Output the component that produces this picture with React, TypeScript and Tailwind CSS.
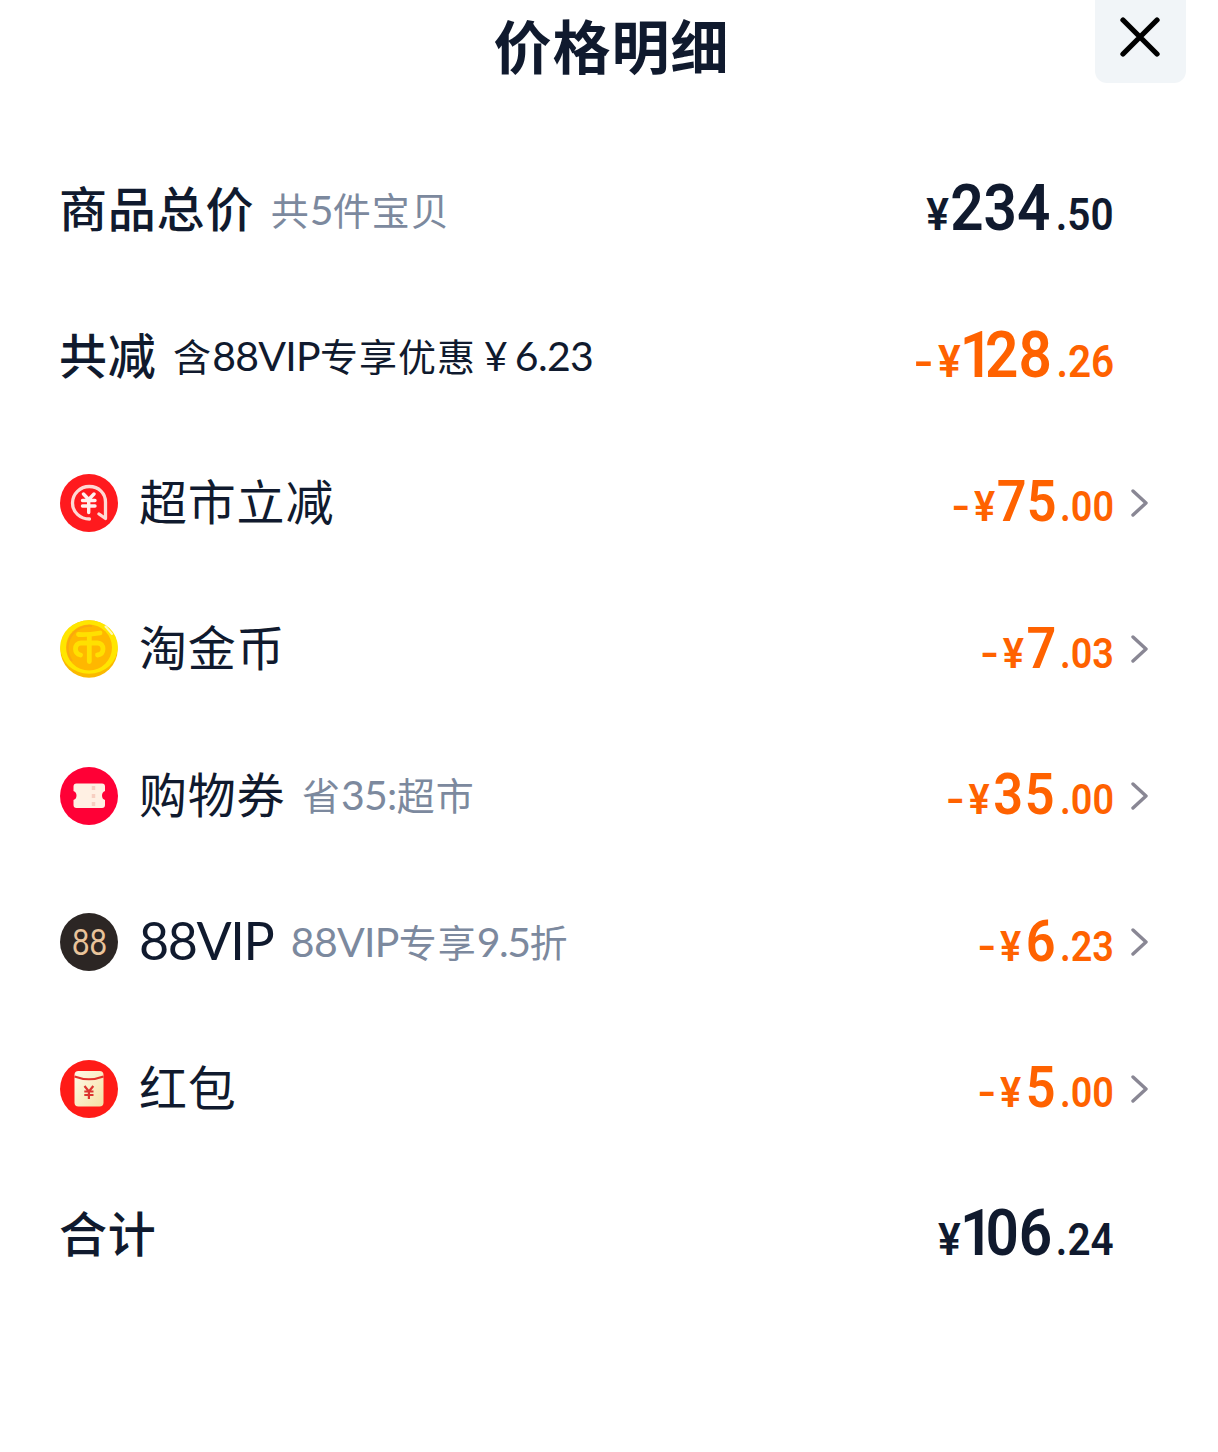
import type { ReactNode } from "react";

type Part = { text: string; className: string };

type Row = {
  parts: Part[];
  note?: Part[];
  noteClass?: string;
  icon?: ReactNode;
  bold?: boolean;
  minus?: boolean;
  whole: string;
  wholeClass?: string;
  cents: string;
};

const DiscountIcon = () => (
  <svg viewBox="0 0 58 58" className="size-[58px]">
    <circle cx="29" cy="29" r="29" fill="#ff1a1e" />
    <path d="M29.500 45C20 45 12.500 38 12.500 29C12.500 20 20 12.500 29.300 12.500C39 12.500 45.500 19.500 45.500 28V44.500L39 40" fill="none" stroke="#ffd9d4" strokeWidth="3.300" strokeLinejoin="round" strokeLinecap="round" />
    <path d="M23.500 20L28.700 25.500L34 20M22.500 26.500H35M22.500 32H35M28.700 25.500V38.500" fill="none" stroke="#fff0ee" strokeWidth="3.400" strokeLinecap="round" />
  </svg>
);

const CoinIcon = () => (
  <svg viewBox="0 0 58 58" className="size-[58px]">
    <circle cx="29" cy="29" r="28.700" fill="#fbb900" />
    <ellipse cx="29" cy="27" rx="28.800" ry="26.800" fill="#ffe600" />
    <circle cx="29" cy="27.500" r="23" fill="#ffb700" />
    <path d="M12 41A22 22 0 0 1 32 6" fill="none" stroke="#faa80f" strokeWidth="2" />
    <path d="M18.500 14.500C26 15 34 14 40 13M29.300 15V41.500M20.500 35C16.500 34 15.500 31 15.500 29C15.500 25.500 17.500 23 21 23H37.500C41 23 43 25.500 43 29C43 32 41.500 34.500 37.500 35" fill="none" stroke="#ffe000" strokeWidth="4.800" strokeLinecap="round" strokeLinejoin="round" />
    <path d="M45.500 6.500L52 14" stroke="#fff9b8" strokeWidth="2" strokeLinecap="round" />
  </svg>
);

const TicketIcon = () => (
  <svg viewBox="0 0 58 58" className="size-[58px]">
    <circle cx="29" cy="29" r="29" fill="#ff0036" />
    <path d="M16.500 16.500H42Q45 16.500 45 19.500V24Q42 25 42 28.500Q42 32 45 33V38Q45 41 42 41H16.500Q13.500 41 13.500 38V33Q16.500 32 16.500 28.500Q16.500 25 13.500 24V19.500Q13.500 16.500 16.500 16.500Z" fill="#fff0e3" />
    <path d="M33.500 19V39.500" stroke="#f7cfc1" strokeWidth="3.500" strokeDasharray="4 4" />
  </svg>
);

const VipIcon = () => (
  <svg viewBox="0 0 58 58" className="size-[58px]">
    <circle cx="29" cy="29" r="29" fill="#2c2624" />
    <text x="12" y="41.500" textLength="35" lengthAdjust="spacingAndGlyphs" fill="#e9c49b" className="font-[Lato] text-[37px]">88</text>
  </svg>
);

const PacketIcon = () => (
  <svg viewBox="0 0 58 58" className="size-[58px]">
    <defs>
      <linearGradient id="packet" x1="0" y1="0" x2="1" y2="1">
        <stop offset="0" stopColor="#fffbe8" />
        <stop offset="1" stopColor="#f5dfa4" />
      </linearGradient>
    </defs>
    <circle cx="29" cy="29" r="29" fill="#ff1b17" />
    <rect x="14.500" y="11" width="29" height="35.500" rx="4" fill="url(#packet)" />
    <path d="M14.500 16.500Q29 22 43.500 16.500" fill="none" stroke="#e3312a" strokeWidth="1.900" />
    <path d="M24.500 26L28.900 31.500L33.300 26M24.300 31.500H33.500M24.300 35H33.500M28.900 31.500V39" fill="none" stroke="#dc3430" strokeWidth="2.200" />
  </svg>
);

const cjk = "tracking-[0.8px]";
const cjkNote = "tracking-[1px]";
const latinNote = "font-[Lato] text-[41px] tracking-[-0.7px]";

const rows: Row[] = [
  {
    bold: true,
    parts: [{ text: "商品总价", className: cjk }],
    noteClass: "text-[#7c899e]",
    note: [
      { text: "共", className: cjkNote },
      { text: "5", className: latinNote },
      { text: "件宝贝", className: cjkNote },
    ],
    whole: "234",
    wholeClass: "ml-[2px] mr-[2px]",
    cents: ".50",
  },
  {
    bold: true,
    parts: [{ text: "共减", className: cjk }],
    noteClass: "text-[#101a2e]",
    note: [
      { text: "含", className: cjkNote },
      { text: "88VIP", className: latinNote },
      { text: "专享优惠", className: cjkNote },
      { text: "¥", className: "ml-[8px] mr-[7px] font-[Lato] text-[41px]" },
      { text: "6.23", className: latinNote },
    ],
    minus: true,
    whole: "128",
    wholeClass: "mr-[1px] first-letter:tracking-[-9px]",
    cents: ".26",
  },
  { icon: <DiscountIcon />, parts: [{ text: "超市立减", className: cjk }], minus: true, whole: "75", wholeClass: "ml-[2px]", cents: ".00" },
  { icon: <CoinIcon />, parts: [{ text: "淘金币", className: cjk }], minus: true, whole: "7", wholeClass: "ml-[3px]", cents: ".03" },
  {
    icon: <TicketIcon />,
    parts: [{ text: "购物券", className: cjk }],
    noteClass: "text-[#7c899e]",
    note: [
      { text: "省", className: cjkNote },
      { text: "35:", className: latinNote },
      { text: "超市", className: cjkNote },
    ],
    minus: true,
    whole: "35",
    wholeClass: "ml-[4px] tracking-[2px]",
    cents: ".00",
  },
  {
    icon: <VipIcon />,
    parts: [{ text: "88VIP", className: "relative top-[2px] font-[Lato] text-[52px] tracking-[-1.4px]" }],
    noteClass: "pl-px text-[#7c899e]",
    note: [
      { text: "88VIP", className: latinNote },
      { text: "专享", className: cjkNote },
      { text: "9.5", className: "font-[Lato] text-[41px] tracking-[-1.5px]" },
      { text: "折", className: cjkNote },
    ],
    minus: true,
    whole: "6",
    wholeClass: "ml-[5px] mr-[1px]",
    cents: ".23",
  },
  { icon: <PacketIcon />, parts: [{ text: "红包", className: cjk }], minus: true, whole: "5", wholeClass: "ml-[5px] mr-[1px]", cents: ".00" },
  { bold: true, parts: [{ text: "合计", className: cjk }], whole: "106", wholeClass: "first-letter:tracking-[-9px]", cents: ".24" },
];

const Amount = ({ row }: { row: Row }) => (
  <div
    className={`mb-[3px] flex origin-right scale-x-90 items-baseline font-[Roboto] font-semibold leading-none ${row.minus ? "text-[#ff6200]" : "text-[#101a2e]"} ${row.bold ? "text-[45px]" : "text-[42px]"}`}
  >
    {row.minus && <span className="mr-[8px] inline-block scale-x-135">-</span>}
    <span className="inline-block scale-x-105">¥</span>
    <span className={`${row.bold ? "text-[65px]" : "text-[58px]"} ${row.wholeClass ?? ""}`}>{row.whole}</span>
    <span className="ml-1">{row.cents}</span>
  </div>
);

const PriceRow = ({ row }: { row: Row }) => (
  <div className="flex h-[146.4px] items-center pl-[60px] pr-[70px]">
    {row.icon && <div className="mr-[21px]">{row.icon}</div>}
    <div className={`mb-[8px] flex items-baseline text-[48px] leading-none text-[#101a2e] ${row.bold ? "-ml-px font-medium" : "font-normal"}`}>
      {row.parts.map((part) => (
        <span key={part.text} className={part.className}>{part.text}</span>
      ))}
    </div>
    {row.note && (
      <div className={`mb-[2px] ml-[16.5px] flex items-baseline text-[38px] leading-none ${row.noteClass}`}>
        {row.note.map((part) => (
          <span key={part.text} className={part.className}>{part.text}</span>
        ))}
      </div>
    )}
    <div className="ml-auto flex items-center">
      <Amount row={row} />
      <div className="ml-[17px] h-7 w-[17px]">
        {row.icon && (
          <svg viewBox="0 0 17 28" className="h-7 w-[17px]">
            <path d="M2 2L15 14L2 26" fill="none" stroke="#898794" strokeWidth="3.400" strokeLinecap="round" strokeLinejoin="round" />
          </svg>
        )}
      </div>
    </div>
  </div>
);

export default function App() {
  return (
    <div className="h-[1452px] w-[1218px] overflow-hidden bg-white font-['Noto_Sans_CJK_SC',sans-serif]">
      <header className="grid h-[137px] grid-cols-[1fr_auto_1fr] items-start">
        <h1 className="col-start-2 ml-[5px] mt-[15px] text-[58px] font-bold leading-none tracking-[1px] text-[#101a2e]">价格明细</h1>
        <button className="mr-8 flex h-[83px] w-[91px] items-end justify-center justify-self-end rounded-b-xl bg-[#f1f5f8] pb-[26px]">
          <svg viewBox="0 0 40 40" className="mr-px size-10">
            <path d="M3 3L37 37M37 3L3 37" fill="none" stroke="#000" strokeWidth="5.300" strokeLinecap="round" />
          </svg>
        </button>
      </header>
      <main>
        {rows.map((row) => (
          <PriceRow key={row.parts[0].text} row={row} />
        ))}
      </main>
    </div>
  );
}
